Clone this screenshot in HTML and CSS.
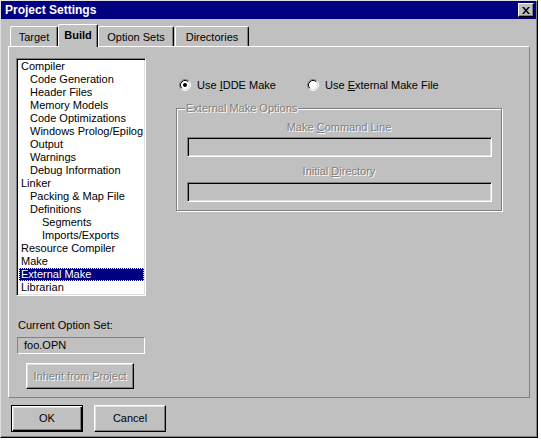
FILE: index.html
```html
<!DOCTYPE html>
<html>
<head>
<meta charset="utf-8">
<link rel="stylesheet" href="styles.css">
</head>
<body>
<div class="window">
  <div class="titlebar">
    <span class="title">Project Settings</span>
    <span class="close"><svg width="8" height="7" viewBox="0 0 8 7"><path d="M0 0h2l2 2.5L6 0h2L5 3.5 8 7H6L4 4.5 2 7H0l3-3.5z" fill="#000"/></svg></span>
  </div>
  <div class="tabs">
    <div class="tab t-target">Target</div>
    <div class="tab active t-build">Build</div>
    <div class="tab t-opts">Option Sets</div>
    <div class="tab t-dirs">Directories</div>
  </div>
  <div class="panel">
    <div class="leftcol">
      <ul class="tree">
        <li class="l0">Compiler</li>
        <li class="l1">Code Generation</li>
        <li class="l1">Header Files</li>
        <li class="l1">Memory Models</li>
        <li class="l1">Code Optimizations</li>
        <li class="l1">Windows Prolog/Epilog</li>
        <li class="l1">Output</li>
        <li class="l1">Warnings</li>
        <li class="l1">Debug Information</li>
        <li class="l0">Linker</li>
        <li class="l1">Packing &amp; Map File</li>
        <li class="l1">Definitions</li>
        <li class="l2">Segments</li>
        <li class="l2">Imports/Exports</li>
        <li class="l0">Resource Compiler</li>
        <li class="l0">Make</li>
        <li class="l0 sel">External Make</li>
        <li class="l0">Librarian</li>
      </ul>
      <div class="curlabel">Current Option Set:</div>
      <div class="curfield">foo.OPN</div>
      <div class="btn inherit disabled">Inherit from Project</div>
    </div>
    <div class="rightcol">
      <div class="radios">
        <div class="radio r1">
          <svg width="12" height="12" viewBox="0 0 12 12"><circle cx="6" cy="6" r="4.5" fill="#fff"/><path d="M2.11 9.89A5.5 5.5 0 0 1 9.89 2.11" stroke="#808080" fill="none"/><path d="M9.89 2.11A5.5 5.5 0 0 1 2.11 9.89" stroke="#fff" fill="none"/><path d="M2.82 9.18A4.5 4.5 0 0 1 9.18 2.82" stroke="#000" fill="none"/><path d="M9.18 2.82A4.5 4.5 0 0 1 2.82 9.18" stroke="#dfdfdf" fill="none"/><circle cx="6" cy="6" r="2" fill="#000"/></svg>
          <span>Use <u>I</u>DDE Make</span>
        </div>
        <div class="radio r2">
          <svg width="12" height="12" viewBox="0 0 12 12"><circle cx="6" cy="6" r="4.5" fill="#fff"/><path d="M2.11 9.89A5.5 5.5 0 0 1 9.89 2.11" stroke="#808080" fill="none"/><path d="M9.89 2.11A5.5 5.5 0 0 1 2.11 9.89" stroke="#fff" fill="none"/><path d="M2.82 9.18A4.5 4.5 0 0 1 9.18 2.82" stroke="#000" fill="none"/><path d="M9.18 2.82A4.5 4.5 0 0 1 2.82 9.18" stroke="#dfdfdf" fill="none"/></svg>
          <span>Use <u>E</u>xternal Make File</span>
        </div>
      </div>
      <div class="group">
        <div class="legend disabled">External Make Options</div>
        <div class="glabel l-cmd disabled">Make <u>C</u>ommand Line</div>
        <div class="ginput"></div>
        <div class="glabel l-dir disabled">Initial <u>D</u>irectory</div>
        <div class="ginput"></div>
      </div>
    </div>
  </div>
  <div class="buttons">
    <div class="btn default">OK</div>
    <div class="btn cancel">Cancel</div>
  </div>
</div>
</body>
</html>
```

FILE: styles.css
```css
body {
  margin: 0;
  background: #fff;
  font-family: "Liberation Sans", Arial, sans-serif;
  font-size: 11px;
  line-height: 13px;
  color: #000;
}

.window {
  width: 538px;
  height: 438px;
  box-sizing: border-box;
  background: #c0c0c0;
  border-top: 1px solid #dfdfdf;
  border-left: 1px solid #dfdfdf;
  border-right: 1px solid #000;
  border-bottom: 1px solid #000;
  box-shadow: inset -1px -1px 0 #808080;
  display: flex;
  flex-direction: column;
}

.titlebar {
  height: 18px;
  margin-right: 1px;
  background: #000080;
  color: #fff;
  display: flex;
  align-items: center;
  justify-content: space-between;
  padding: 0 2px 0 4px;
}

.title {
  font-weight: bold;
  font-size: 12px;
}

.close {
  width: 16px;
  height: 14px;
  box-sizing: border-box;
  background: #c0c0c0;
  border-top: 1px solid #fff;
  border-left: 1px solid #fff;
  border-right: 1px solid #000;
  border-bottom: 1px solid #000;
  box-shadow: inset -1px -1px 0 #808080;
  display: flex;
  align-items: center;
  justify-content: center;
}

.tabs {
  height: 27px;
  display: flex;
  align-items: flex-end;
  padding-left: 9px;
}

.tab {
  height: 20px;
  box-sizing: border-box;
  border-top: 1px solid #fff;
  border-left: 1px solid #fff;
  border-right: 1px solid #000;
  border-top-left-radius: 2px;
  border-top-right-radius: 2px;
  box-shadow: inset -1px 0 0 #808080;
  display: flex;
  align-items: center;
  justify-content: center;
  padding-top: 2px;
  background: #c0c0c0;
}

.t-target { width: 48px; }
.t-build { width: 40px; }
.t-opts { width: 76px; }
.t-dirs { width: 74px; margin-left: 1px; }

.tab.active {
  height: 23px;
  margin-bottom: -1px;
  font-weight: bold;
  position: relative;
  z-index: 1;
  padding-top: 0;
  padding-bottom: 1px;
}

.panel {
  margin-left: 7px;
  width: 522px;
  height: 352px;
  box-sizing: border-box;
  border-top: 1px solid #fff;
  border-left: 1px solid #fff;
  border-right: 1px solid #808080;
  border-bottom: 1px solid #808080;
  padding: 11px 0 0 7px;
  display: flex;
}

.leftcol {
  width: 130px;
  display: flex;
  flex-direction: column;
}

.tree {
  list-style: none;
  margin: 0;
  padding: 0;
  height: 238px;
  box-sizing: border-box;
  background: #fff;
  border-top: 1px solid #808080;
  border-left: 1px solid #808080;
  border-right: 1px solid #fff;
  border-bottom: 1px solid #fff;
  box-shadow: inset 1px 1px 0 #000, inset -1px -1px 0 #dfdfdf;
  padding: 1px 1px 1px 1px;
}

.tree li {
  height: 13px;
  margin-left: 1px;
  white-space: nowrap;
}

.tree .l0 { padding-left: 2px; }
.tree .l1 { padding-left: 11px; }
.tree .l2 { padding-left: 23px; }

.tree .sel {
  background: #000080;
  color: #fff;
  outline: 1px dotted #ffff80;
  outline-offset: -1px;
}

.curlabel {
  margin-top: 23px;
  padding-left: 2px;
}

.curfield {
  margin-top: 5px;
  margin-left: 1px;
  width: 128px;
  height: 17px;
  box-sizing: border-box;
  border-top: 1px solid #808080;
  border-left: 1px solid #808080;
  border-right: 1px solid #fff;
  border-bottom: 1px solid #fff;
  padding: 1px 0 0 6px;
}

.btn {
  box-sizing: border-box;
  background: #c0c0c0;
  border-top: 1px solid #fff;
  border-left: 1px solid #fff;
  border-right: 1px solid #000;
  border-bottom: 1px solid #000;
  box-shadow: inset -1px -1px 0 #808080, inset 1px 1px 0 #dfdfdf;
  display: flex;
  align-items: center;
  justify-content: center;
}

.inherit {
  margin-top: 9px;
  margin-left: 10px;
  width: 108px;
  height: 26px;
}

.disabled {
  color: #808080;
  text-shadow: 1px 1px 0 #fff;
}

.rightcol {
  margin-left: 30px;
  width: 326px;
}

.radios {
  margin-top: 21px;
  height: 12px;
  display: flex;
  align-items: center;
  padding-left: 3px;
}

.radio {
  display: flex;
  align-items: center;
  gap: 6px;
}

.radio svg { flex: none; }

.r1 { width: 128px; }

.group {
  margin-top: 17px;
  height: 103px;
  box-sizing: border-box;
  border: 1px solid #808080;
  box-shadow: inset 1px 1px 0 #fff, 1px 1px 0 #fff;
  display: flex;
  flex-direction: column;
}

.legend {
  align-self: flex-start;
  margin: -7px 0 0 8px;
  padding: 0 1px;
  background: #c0c0c0;
}

.glabel {
  text-align: center;
  margin-top: 6px;
}

.l-dir { margin-top: 8px; }

.ginput {
  margin: 3px 9px 0 10px;
  height: 20px;
  box-sizing: border-box;
  border-top: 1px solid #808080;
  border-left: 1px solid #808080;
  border-right: 1px solid #fff;
  border-bottom: 1px solid #fff;
  box-shadow: inset 1px 1px 0 #000, inset -1px -1px 0 #dfdfdf;
}

.l-dir + .ginput { margin-top: 4px; }

.buttons {
  display: flex;
  padding-left: 10px;
  margin-top: 7px;
  gap: 11px;
}

.buttons .btn {
  width: 72px;
  height: 27px;
}

.btn.default {
  border: 1px solid #000;
  box-shadow: inset 1px 1px 0 #fff, inset -1px -1px 0 #000, inset -2px -2px 0 #808080, inset 2px 2px 0 #dfdfdf;
}
```
